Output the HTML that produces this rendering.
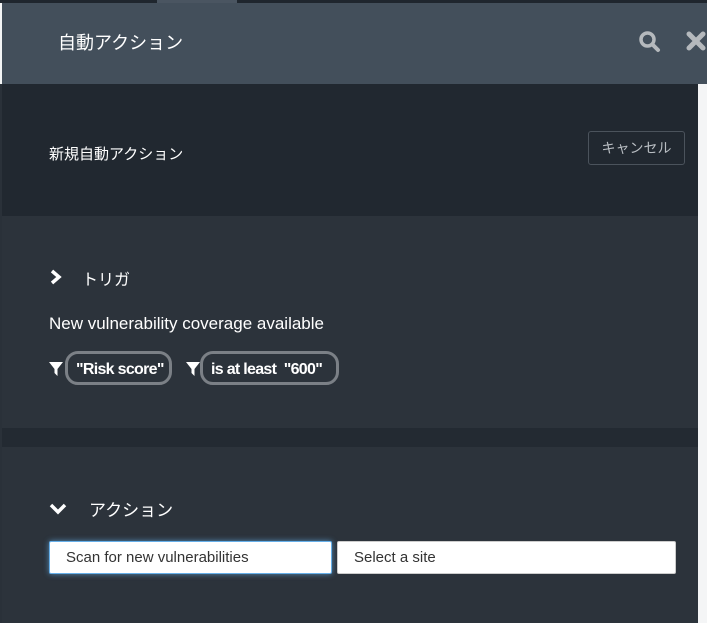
<!DOCTYPE html>
<html><head><meta charset="utf-8"><style>
*{margin:0;padding:0;box-sizing:border-box}
body{width:707px;height:623px;overflow:hidden;background:#f4f5f6;font-family:"Liberation Sans","Noto Sans CJK JP",sans-serif;position:relative}
.topstrip{position:absolute;left:0;top:0;width:707px;height:3px;background:#1f262e}
.tab{position:absolute;left:157px;top:0;width:80px;height:3px;background:#4a5561}
.header{position:absolute;left:2px;top:3px;width:705px;height:81px;background:#434f5b}
.header h1{position:absolute;left:56px;top:26px;font-size:18px;font-weight:normal;color:#fff}
.leftstrip{position:absolute;left:0;top:84px;width:2px;height:539px;background:#2a3139}
.s1{position:absolute;left:2px;top:84px;width:696px;height:132px;background:#212830}
.s2{position:absolute;left:2px;top:216px;width:696px;height:212px;background:#2c333b}
.sep{position:absolute;left:2px;top:428px;width:696px;height:19px;background:#232a32}
.s3{position:absolute;left:2px;top:447px;width:696px;height:176px;background:#2c333b}
.t{position:absolute;color:#fff;white-space:nowrap}
.btn{position:absolute;left:588px;top:131px;width:97px;height:34px;border:1px solid #4b535c;border-radius:3px;color:#b8bdc2;font-size:14px;text-align:center;line-height:32px}
.chip{position:absolute;top:351px;height:34px;border:3px solid #7b8086;border-radius:13px;color:#fff;font-size:16px;font-weight:bold;line-height:31px;padding-left:8px;white-space:nowrap;letter-spacing:-0.7px}
.inp{position:absolute;top:541px;height:33px;background:#fff;border-radius:2px;font-size:15px;color:#333;line-height:31px;padding-left:16px;white-space:nowrap}
</style></head><body>
<div class="topstrip"></div><div class="tab"></div>
<div class="header"><h1>自動アクション</h1>
<svg style="position:absolute;left:636px;top:27px" width="24" height="24" viewBox="0 0 24 24"><circle cx="9.5" cy="9.5" r="6.5" fill="none" stroke="#b5b9bd" stroke-width="3.5"/><line x1="14.5" y1="14.5" x2="20" y2="20" stroke="#b5b9bd" stroke-width="4" stroke-linecap="round"/></svg>
<svg style="position:absolute;left:684px;top:28px" width="20" height="20" viewBox="0 0 20 20"><path d="M3 3L17 17M17 3L3 17" stroke="#b5b9bd" stroke-width="5" stroke-linecap="round"/></svg>
</div>
<div class="leftstrip"></div>
<div class="s1"></div><div class="s2"></div><div class="sep"></div><div class="s3"></div>
<div class="t" style="left:49px;top:143px;font-size:15px">新規自動アクション</div>
<div class="btn">キャンセル</div>
<svg style="position:absolute;left:49px;top:269px" width="14" height="16" viewBox="0 0 14 16"><path d="M3 2L10 8L3 14" fill="none" stroke="#fff" stroke-width="3.5"/></svg>
<div class="t" style="left:82px;top:266px;font-size:16px">トリガ</div>
<div class="t" style="left:49px;top:314px;font-size:17px">New vulnerability coverage available</div>
<svg style="position:absolute;left:48px;top:361px" width="16" height="16" viewBox="0 0 16 16"><path d="M1 1H15L9.5 8V15L6.5 12V8Z" fill="#fff"/></svg>
<div class="chip" style="left:65px;width:107px">"Risk score"</div>
<svg style="position:absolute;left:185px;top:361px" width="16" height="16" viewBox="0 0 16 16"><path d="M1 1H15L9.5 8V15L6.5 12V8Z" fill="#fff"/></svg>
<div class="chip" style="left:200px;width:139px">is at least &nbsp;"600"</div>
<svg style="position:absolute;left:49px;top:502px" width="18" height="14" viewBox="0 0 18 14"><path d="M2 3L9 10L16 3" fill="none" stroke="#fff" stroke-width="3.5"/></svg>
<div class="t" style="left:89px;top:496px;font-size:17px">アクション</div>
<div class="inp" style="left:49px;width:283px;border:1px solid #66afe9;box-shadow:0 0 6px rgba(102,175,233,.7)">Scan for new vulnerabilities</div>
<div class="inp" style="left:337px;width:339px;border:1px solid #ccc">Select a site</div>
</body></html>
